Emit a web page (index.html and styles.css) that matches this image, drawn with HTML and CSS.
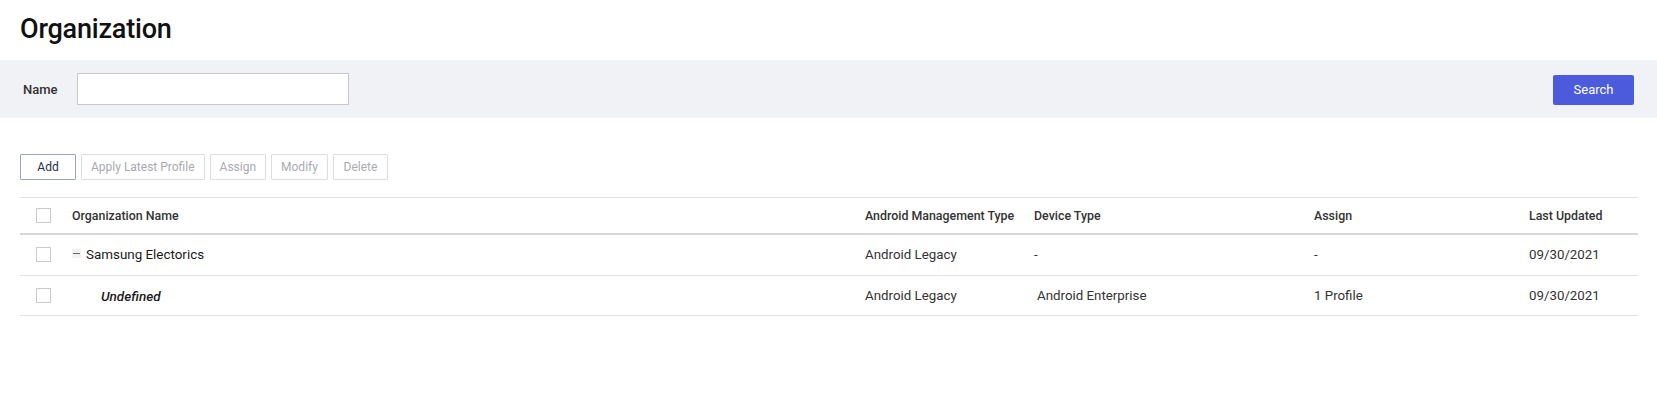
FILE: index.html
```html
<!DOCTYPE html>
<html>
<head>
<meta charset="utf-8">
<link rel="stylesheet" href="styles.css">
</head>
<body>
<div class="page">
  <h1 class="title">Organization</h1>
  <div class="search-bar">
    <label class="search-label">Name</label>
    <input class="search-input" type="text">
    <button class="btn-search">Search</button>
  </div>
  <div class="content">
    <div class="toolbar">
      <button class="btn btn-active">Add</button>
      <button class="btn btn-disabled">Apply Latest Profile</button>
      <button class="btn btn-disabled">Assign</button>
      <button class="btn btn-disabled">Modify</button>
      <button class="btn btn-disabled">Delete</button>
    </div>
    <table class="grid">
      <colgroup>
        <col class="c-check">
        <col class="c-name">
        <col class="c-mgmt">
        <col class="c-device">
        <col class="c-assign">
        <col class="c-date">
      </colgroup>
      <thead>
        <tr>
          <th><span class="checkbox"></span></th>
          <th>Organization Name</th>
          <th>Android Management Type</th>
          <th>Device Type</th>
          <th>Assign</th>
          <th>Last Updated</th>
        </tr>
      </thead>
      <tbody>
        <tr class="row-1">
          <td><span class="checkbox"></span></td>
          <td class="org-name"><span class="toggle"></span>Samsung Electorics</td>
          <td>Android Legacy</td>
          <td>-</td>
          <td>-</td>
          <td>09/30/2021</td>
        </tr>
        <tr class="row-2">
          <td><span class="checkbox"></span></td>
          <td class="org-child">Undefined</td>
          <td>Android Legacy</td>
          <td class="indent-s">Android Enterprise</td>
          <td>1 Profile</td>
          <td>09/30/2021</td>
        </tr>
      </tbody>
    </table>
  </div>
</div>
</body>
</html>
```

FILE: styles.css
```css
* { box-sizing: border-box; }
html, body { margin: 0; padding: 0; background: #fff; }
body { font-family: Roboto, "Noto Sans", sans-serif; color: #222; }

.title {
  margin: 0;
  height: 60px;
  padding: 12px 0 0 20px;
  font-size: 27px;
  font-weight: 500;
  line-height: 34px;
  color: #111;
  letter-spacing: -0.2px;
}

.search-bar {
  height: 58px;
  background: #f1f2f6;
  display: flex;
  align-items: center;
  padding: 0 23px 0 23px;
}
.search-label {
  font-size: 13px;
  font-weight: 500;
  color: #333;
  width: 54px;
}
.search-input {
  width: 272px;
  height: 32px;
  border: 1px solid #c6c8cf;
  background: #fff;
  outline: none;
  margin: 0;
}
.btn-search {
  margin-left: auto;
  width: 81px;
  height: 30px;
  border: none;
  border-radius: 2px;
  background: #4b5bdb;
  color: #fff;
  font-family: Roboto, sans-serif;
  font-size: 13px;
  margin-top: 1px;
}

.content { padding: 36px 19px 0 20px; }

.toolbar { display: flex; gap: 5px; height: 26px; }
.btn {
  height: 26px;
  min-width: 55px;
  padding: 0 9px;
  background: #fff;
  font-family: Roboto, sans-serif;
  font-size: 12px;
  border-radius: 1px;
}
.btn-active { width: 56px; border: 1px solid #9ea2b6; color: #2a2f4a; }
.btn-disabled { border: 1px solid #dcdde0; color: #a9aab0; }

.grid {
  margin-top: 17px;
  width: 100%;
  border-collapse: collapse;
  table-layout: fixed;
  border-top: 1px solid #e2e3e6;
}
.c-check { width: 52px; }
.c-name { width: 793px; }
.c-mgmt { width: 169px; }
.c-device { width: 280px; }
.c-assign { width: 215px; }
.c-date { width: 109px; }

.grid th {
  height: 36px;
  text-align: left;
  font-size: 12.4px;
  font-weight: 500;
  color: #333;
  padding: 0;
  border-bottom: 2px solid #d6d7da;
}
.grid td {
  text-align: left;
  font-size: 13.3px;
  color: #333;
  padding: 0;
  border-bottom: 1px solid #e2e3e6;
}
.row-1 td { height: 42px; }
.row-2 td { height: 40px; }

.checkbox {
  display: block;
  width: 15px;
  height: 15px;
  margin-left: 16px;
  border: 1px solid #c9cad0;
  background: #fff;
}

.org-name { font-size: 13.4px !important; color: #1a1a1a !important; }
.toggle {
  display: inline-block;
  width: 9px;
  height: 9px;
  margin-right: 5px;
  background: #f1f1f1;
  position: relative;
  vertical-align: 1px;
}
.toggle::after {
  content: "";
  position: absolute;
  left: 1px;
  right: 1px;
  top: 4px;
  height: 1px;
  background: #666;
}
.org-child {
  padding-left: 29px !important;
  font-style: italic;
  font-weight: 500;
  font-size: 13.5px !important;
  color: #1a1a1a !important;
}
.indent-s { padding-left: 3px !important; }
```
